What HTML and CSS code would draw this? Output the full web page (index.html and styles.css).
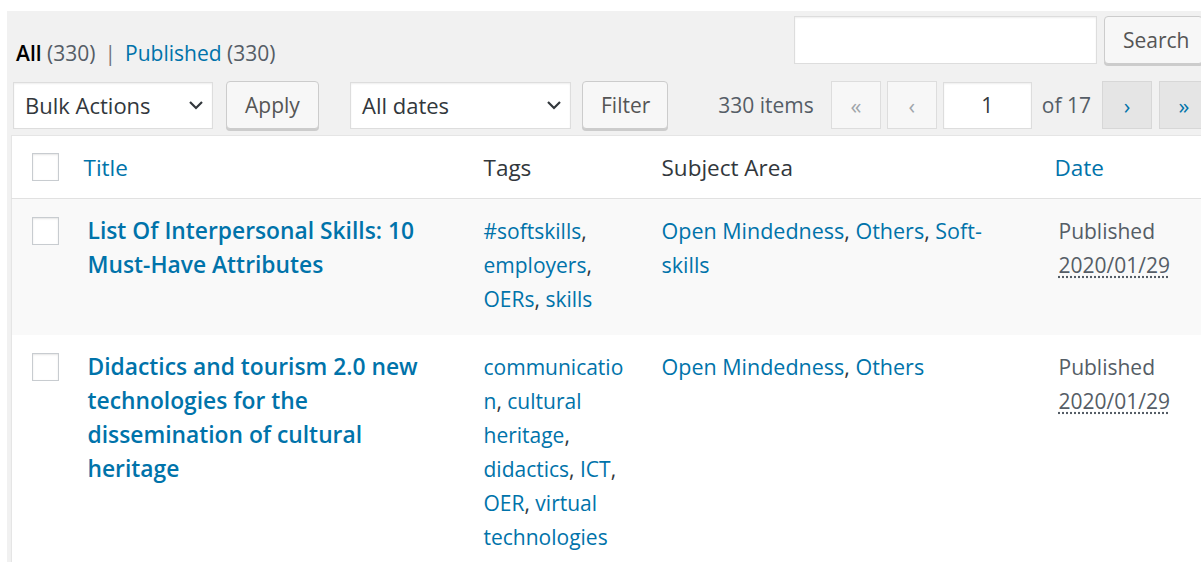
FILE: index.html
```html
<!DOCTYPE html>
<html lang="en">
<head>
<meta charset="utf-8">
<title>Posts</title>
<link rel="stylesheet" href="styles.css">
</head>
<body>
<div class="wrap">
  <div class="topbar">
    <ul class="views">
      <li class="current">All <span class="count">(330)</span></li>
      <li class="sep">|</li>
      <li><a href="#">Published <span class="count">(330)</span></a></li>
    </ul>
    <div class="search-box">
      <input class="search-input" type="search" aria-label="Search Posts">
      <button class="button">Search</button>
    </div>
  </div>

  <div class="tablenav">
    <div class="select bulk">
      <span>Bulk Actions</span>
      <svg class="chev" width="16" height="10" viewBox="0 0 16 10"><path d="M2 2l6 6 6-6" fill="none" stroke="#32373c" stroke-width="2.2"/></svg>
    </div>
    <button class="button apply">Apply</button>
    <div class="select dates">
      <span>All dates</span>
      <svg class="chev" width="16" height="10" viewBox="0 0 16 10"><path d="M2 2l6 6 6-6" fill="none" stroke="#32373c" stroke-width="2.2"/></svg>
    </div>
    <button class="button filter">Filter</button>

    <div class="pages">
      <span class="displaying">330 items</span>
      <span class="page-btn disabled">«</span>
      <span class="page-btn disabled">‹</span>
      <input class="page-input" type="text" value="1" aria-label="Current Page">
      <span class="total">of 17</span>
      <a class="page-btn active" href="#">›</a>
      <a class="page-btn active" href="#">»</a>
    </div>
  </div>

  <table class="posts">
    <colgroup>
      <col class="c-cb">
      <col class="c-title">
      <col class="c-tags">
      <col class="c-subject">
      <col class="c-date">
    </colgroup>
    <thead>
      <tr>
        <th class="cb"><input type="checkbox" class="check"></th>
        <th class="sortable"><a href="#">Title</a></th>
        <th>Tags</th>
        <th>Subject Area</th>
        <th class="sortable"><a href="#">Date</a></th>
      </tr>
    </thead>
    <tbody>
      <tr class="alt">
        <td class="cb"><input type="checkbox" class="check"></td>
        <td class="title"><a class="row-title" href="#">List Of Interpersonal Skills: 10 Must-Have Attributes</a></td>
        <td class="tags"><a href="#">#softskills</a>, <a href="#">employers</a>, <a href="#">OERs</a>, <a href="#">skills</a></td>
        <td class="subject"><a href="#">Open Mindedness</a>, <a href="#">Others</a>, <a href="#">Soft-skills</a></td>
        <td class="date">Published<br><abbr title="2020/01/29">2020/01/29</abbr></td>
      </tr>
      <tr>
        <td class="cb"><input type="checkbox" class="check"></td>
        <td class="title"><a class="row-title" href="#">Didactics and tourism 2.0 new technologies for the dissemination of cultural heritage</a></td>
        <td class="tags"><a href="#">communication</a>, <a href="#">cultural heritage</a>, <a href="#">didactics</a>, <a href="#">ICT</a>, <a href="#">OER</a>, <a href="#">virtual technologies</a></td>
        <td class="subject"><a href="#">Open Mindedness</a>, <a href="#">Others</a></td>
        <td class="date">Published<br><abbr title="2020/01/29">2020/01/29</abbr></td>
      </tr>
    </tbody>
  </table>
</div>
</body>
</html>
```

FILE: styles.css
```css
html, body {
  margin: 0;
  overflow: hidden;
  background: #fff;
}

body {
  font-family: "Open Sans", "Noto Sans", sans-serif;
  color: #32373c;
  height: 562px;
}

a {
  color: #0073aa;
  text-decoration: none;
}

.wrap {
  margin: 11px 0 0 7px;
  width: 1210px;
  height: 600px;
  background: #f1f1f1;
}

/* ---- views + search ---- */
.topbar {
  display: flex;
  align-items: flex-start;
  height: 70px;
}

.views {
  list-style: none;
  margin: 0;
  padding: 27px 0 0 9px;
  display: flex;
  gap: 9px;
  font-size: 21px;
  line-height: 30px;
  flex: 1;
}

.views .current {
  color: #000;
  font-weight: 600;
}

.views .count {
  color: #555d66;
  font-weight: 400;
}

.views .sep {
  color: #72777c;
}

.search-box {
  display: flex;
  gap: 7px;
  margin: 5px 14px 0 0;
}

.search-input {
  width: 303px;
  height: 48px;
  box-sizing: border-box;
  border: 1px solid #ddd;
  background: #fff;
  box-shadow: inset 0 1px 2px rgba(0, 0, 0, .07);
  margin: 0;
}

.button {
  font-family: inherit;
  font-size: 21px;
  color: #555;
  background: #f7f7f7;
  border: 1px solid #ccc;
  border-radius: 4px;
  box-shadow: 0 2px 0 #ccc;
  height: 48px;
  padding: 0 18px;
  margin: 0;
  line-height: 44px;
}

.search-box .button {
  width: 99px;
  text-align: left;
}

/* ---- tablenav ---- */
.tablenav {
  display: flex;
  align-items: center;
  height: 48px;
  margin-bottom: 6px;
}

.select {
  display: flex;
  align-items: center;
  justify-content: space-between;
  box-sizing: border-box;
  height: 47px;
  border: 1px solid #ddd;
  background: #fff;
  box-shadow: inset 0 1px 2px rgba(0, 0, 0, .07);
  font-size: 22px;
  color: #32373c;
  padding: 0 8px 0 11px;
}

.bulk {
  width: 200px;
  margin-left: 6px;
}

.apply {
  margin-left: 13px;
  width: 93px;
}

.dates {
  width: 221px;
  margin-left: 31px;
}

.filter {
  margin-left: 11px;
  width: 86px;
}

.pages {
  margin-left: auto;
  margin-right: 1px;
  display: flex;
  align-items: center;
  font-size: 21px;
  color: #555d66;
}

.displaying {
  margin-right: 17px;
}

.page-btn {
  box-sizing: border-box;
  width: 50px;
  height: 48px;
  display: flex;
  align-items: center;
  justify-content: center;
  border: 1px solid #ddd;
  font-size: 22px;
  margin-right: 6px;
}

.page-btn.disabled {
  background: #f7f7f7;
  color: #a0a5aa;
}

.page-btn.active {
  background: #e5e5e5;
  border-color: #d7d7d7;
  color: #0073aa;
  margin-right: 7px;
}

.page-input {
  box-sizing: border-box;
  width: 89px;
  height: 47px;
  margin: 0;
  border: 1px solid #ddd;
  background: #fff;
  font-family: inherit;
  font-size: 21px;
  color: #32373c;
  text-align: center;
  box-shadow: inset 0 1px 2px rgba(0, 0, 0, .07);
}

.total {
  margin: 0 11px 0 10px;
}

/* ---- list table ---- */
.posts {
  margin-left: 4px;
  width: 1206px;
  border-collapse: collapse;
  table-layout: fixed;
  background: #fff;
  border: 1px solid #e5e5e5;
  box-shadow: 0 1px 1px rgba(0, 0, 0, .04);
}

.c-cb { width: 64px; }
.c-title { width: 396px; }
.c-tags { width: 178px; }
.c-subject { width: 397px; }

.posts th {
  height: 62px;
  padding: 0 12px;
  text-align: left;
  font-weight: 400;
  font-size: 22.5px;
  color: #32373c;
  border-bottom: 1px solid #e1e1e1;
}

.posts th.sortable {
  padding-left: 8px;
}

.posts th.cb {
  padding: 0 0 0 20px;
}

.posts td {
  vertical-align: top;
  padding: 15px 12px 19px;
  font-size: 21.5px;
  line-height: 34px;
}

.posts td.cb {
  padding: 18px 0 0 20px;
}

.posts td.title {
  padding-right: 40px;
}

.posts tr.alt td {
  background: #f9f9f9;
}

.check {
  appearance: none;
  -webkit-appearance: none;
  display: block;
  box-sizing: border-box;
  width: 27px;
  height: 28px;
  margin: 0;
  background: #fff;
  border: 1px solid #c8ccd0;
  box-shadow: inset 0 1px 2px rgba(0, 0, 0, .1);
}

.row-title {
  font-weight: 600;
  font-size: 22.8px;
  display: block;
  padding-bottom: 34px;
}

.posts td.tags {
  font-size: 21px;
  padding-right: 22px;
  overflow-wrap: anywhere;
}

.posts td.subject {
  padding-right: 40px;
}

.posts td.date {
  font-size: 21px;
  color: #555d66;
}

.date abbr {
  text-decoration: underline dotted;
  text-underline-offset: 3px;
}
```
